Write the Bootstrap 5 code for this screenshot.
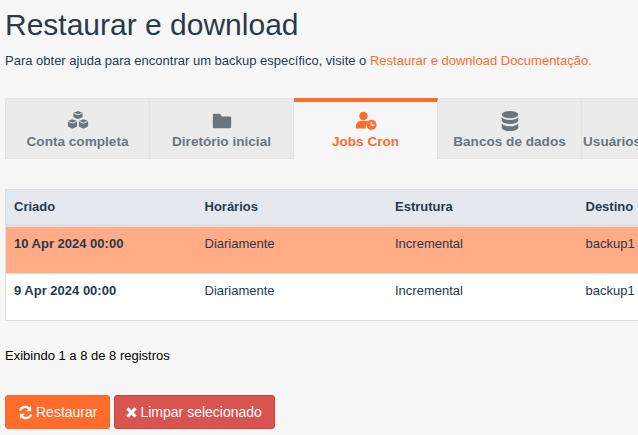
<!DOCTYPE html>
<html lang="pt">

<head>
  <meta charset="UTF-8" />
  <meta name="viewport" content="width=device-width, initial-scale=1.0" />
  <link href="https://cdn.jsdelivr.net/npm/bootstrap@5.3.3/dist/css/bootstrap.min.css" rel="stylesheet" />
  <title>Restaurar e download</title>

  <style>
    html, body {
      overflow: hidden;
    }

    body {
      background: #f7f7f7;
      color: #293a4a;
      font-family: "Liberation Sans", Arial, sans-serif;
      font-size: 13px;
      height: 435px;
    }

    .page-wrap {
      padding: 0 0 0 5px;
      width: 638px;
      overflow: hidden;
    }

    .page-title {
      font-size: 30px;
      font-weight: 400;
      line-height: 34px;
      margin: 8px 0 10px;
      color: #293a4a;
    }

    .page-help {
      margin: 0 0 29px;
      line-height: 17px;
      font-size: 13px;
    }

    .page-help a {
      color: #ff6c2c;
      text-decoration: none;
    }

    .tab-strip {
      display: flex;
      flex-wrap: nowrap;
      height: 61px;
      margin-bottom: 30px;
      width: 800px;
    }

    .tab-item {
      width: 144px;
      flex: none;
      background: #ebebeb;
      border: 1px solid #e2e2e2;
      border-left: 0;
      color: #6c757d;
      font-size: 13.6px;
      font-weight: 700;
      line-height: 16px;
      text-align: center;
      text-decoration: none;
    }

    .tab-item:first-child {
      width: 145px;
      border-left: 1px solid #e2e2e2;
    }

    .tab-item svg {
      display: block;
      margin: 11px auto 2px;
      width: 22px;
      height: 22px;
      fill: #6c757d;
    }

    .tab-item.tab-on {
      background: #f7f7f7;
      border-top: 4px solid #ff6c2c;
      border-bottom: 0;
      color: #ff6c2c;
    }

    .tab-item.tab-on svg {
      margin-top: 8px;
      fill: #ff6c2c;
    }

    .tab-item.tab-cut {
      width: 60px;
      text-align: left;
      white-space: nowrap;
      padding-top: 35px;
      padding-left: 1px;
      border-right: 0;
    }

    .backup-table {
      width: 764px;
      table-layout: fixed;
      border-collapse: separate;
      border-spacing: 0;
      border: 1px solid #dfdfdf;
      background: #fff;
      margin-bottom: 27px;
    }

    .backup-table th {
      background: #e4e9f0;
      border-bottom: 3px solid #dfdfdf;
      font-size: 13px;
      font-weight: 700;
      height: 37px;
      padding: 0 8px;
      vertical-align: middle;
    }

    .backup-table td {
      height: 47px;
      padding: 9px 8px 7px;
      vertical-align: top;
      line-height: 16px;
    }

    .backup-table tr + tr td {
      border-top: 1px solid #dfdfdf;
    }

    .backup-table tbody tr:first-child td {
      border-top: 0;
      height: 46px;
      background: #ffab85;
    }

    .table-info {
      line-height: 16px;
      margin: 0 0 31px;
    }

    .action-btn {
      display: inline-flex;
      align-items: center;
      gap: 3px;
      height: 34px;
      padding: 0 12px;
      border-radius: 3px;
      font-size: 14px;
      color: #fff;
      border: 1px solid transparent;
    }

    .action-btn svg {
      width: 15px;
      height: 15px;
      fill: #fff;
    }

    .action-btn svg.icon-x {
      width: 11px;
      height: 11px;
    }

    .btn-restore {
      background: #ff6c2c;
      border-color: #f4672a;
    }

    .btn-clear {
      background: #d9534f;
      border-color: #d43f3a;
      padding-left: 11px;
    }
  </style>
</head>

<body>
  <div class="page-wrap">
    <h1 class="page-title">Restaurar e download</h1>
    <p class="page-help">Para obter ajuda para encontrar um backup específico, visite o <a href="#">Restaurar e download Documentação.</a></p>

    <div class="tab-strip">
      <a class="tab-item" href="#">
        <svg viewBox="0 0 24 24"><path d="M12 1l5 2v5l-5 2-5-2V3zM6 10l5 2v6l-5 2.500-5-2.500v-6zM18 10l5 2v6l-5 2.500-5-2.500v-6z" /><path d="M7.500 3.500L12 5.300l4.500-1.800M1.500 12.500L6 14.300l4.500-1.800M13.500 12.500L18 14.300l4.500-1.800" fill="none" stroke="#ebebeb" stroke-width="1" /></svg>
        Conta completa
      </a>
      <a class="tab-item" href="#">
        <svg viewBox="0 0 24 24"><path d="M2 5.500A1.500 1.500 0 0 1 3.500 4h6l2.500 3h8.500A1.500 1.500 0 0 1 22 8.500v10a1.500 1.500 0 0 1-1.500 1.500h-17A1.500 1.500 0 0 1 2 18.500z" /></svg>
        Diretório inicial
      </a>
      <a class="tab-item tab-on" href="#">
        <svg viewBox="0 0 26 24"><circle cx="10" cy="6" r="5" /><path d="M1 21v-3a6 6 0 0 1 6-6h6a6 6 0 0 1 3 .800A7.500 7.500 0 0 0 13 21z" /><circle cx="19.500" cy="16.500" r="6" /><path d="M19.500 13v4h3.500" fill="none" stroke="#f7f7f7" stroke-width="1.600" /></svg>
        Jobs Cron
      </a>
      <a class="tab-item" href="#">
        <svg viewBox="0 0 24 24"><ellipse cx="12" cy="5" rx="9" ry="4" /><path d="M3 7.500C4.500 10 8 10.800 12 10.800S19.500 10 21 7.500V12c-1.500 2.500-5 3.300-9 3.300S4.500 14.500 3 12zM3 14.500c1.500 2.500 5 3.300 9 3.300s7.500-.800 9-3.300V19c0 2.200-4 4-9 4s-9-1.800-9-4z" /></svg>
        Bancos de dados
      </a>
      <a class="tab-item tab-cut" href="#">Usuários</a>
    </div>

    <table class="backup-table">
      <thead>
        <tr>
          <th>Criado</th>
          <th>Horários</th>
          <th>Estrutura</th>
          <th>Destino</th>
        </tr>
      </thead>
      <tbody>
        <tr>
          <td class="fw-bold">10 Apr 2024 00:00</td>
          <td>Diariamente</td>
          <td>Incremental</td>
          <td>backup1</td>
        </tr>
        <tr>
          <td class="fw-bold">9 Apr 2024 00:00</td>
          <td>Diariamente</td>
          <td>Incremental</td>
          <td>backup1</td>
        </tr>
      </tbody>
    </table>

    <p class="table-info">Exibindo 1 a 8 de 8 registros</p>

    <div class="d-flex gap-1">
      <button class="action-btn btn-restore" type="button">
        <svg viewBox="0 0 24 24"><path d="M21 2v8h-8l3-3a7 7 0 0 0-11.500 2.500L1.500 8A11 11 0 0 1 19 4zM3 22v-8h8l-3 3a7 7 0 0 0 11.500-2.500l3 1.500A11 11 0 0 1 5 20z" /></svg>
        Restaurar
      </button>
      <button class="action-btn btn-clear" type="button">
        <svg class="icon-x" viewBox="2 2 20 20"><path d="M6.500 2.500L12 8l5.500-5.500 4 4L16 12l5.500 5.500-4 4L12 16l-5.500 5.500-4-4L8 12 2.500 6.500z" /></svg>
        Limpar selecionado
      </button>
    </div>
  </div>

  <script src="https://cdn.jsdelivr.net/npm/bootstrap@5.3.3/dist/js/bootstrap.bundle.min.js"></script>
</body>

</html>
